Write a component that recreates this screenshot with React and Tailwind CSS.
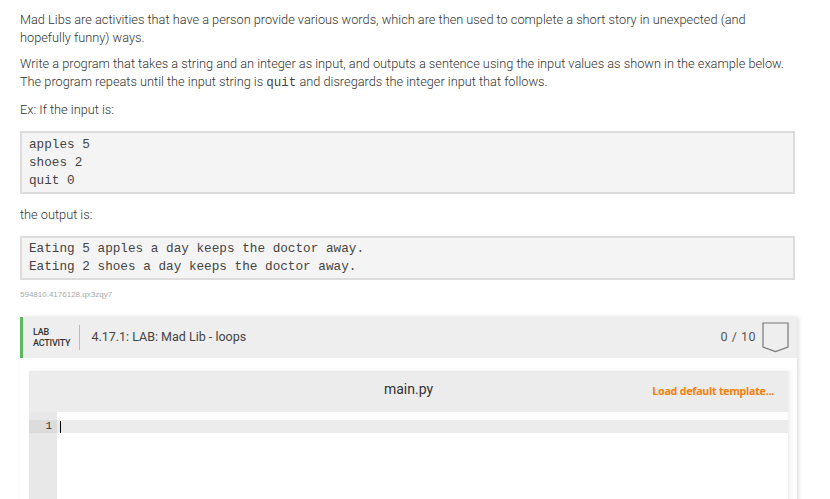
const App = () => {
  return (
    <div className="w-[830px] h-[499px] overflow-hidden bg-white font-['Roboto',sans-serif] text-[#333] font-light">
      <div className="pl-5 pr-[35px] pt-[11px]">
        <p className="text-[12.75px] leading-[18px]">
          Mad Libs are activities that have a person provide various words, which are then used to complete a short story in unexpected (and hopefully funny) ways.
        </p>
        <p className="text-[12.75px] leading-[18px] mt-[8px]">
          Write a program that takes a string and an integer as input, and outputs a sentence using the input values as shown in the example below. The program repeats until the input string is{" "}
          <code className="font-['Liberation_Mono',monospace] font-normal text-[12.5px] leading-[14px] text-[#444]">quit</code> and disregards the integer input that follows.
        </p>
        <p className="text-[12.75px] leading-[18px] mt-[10px]">Ex: If the input is:</p>
        <pre className="mt-[12px] bg-[#f4f4f4] border-2 border-[#dcdcdc] px-[7px] py-[3px] font-['Liberation_Mono',monospace] font-normal text-[12.7px] leading-[18px] text-[#444] h-[63px]">
{`apples 5
shoes 2
quit 0`}
        </pre>
        <p className="text-[12.75px] leading-[18px] mt-[12px]">the output is:</p>
        <pre className="mt-[12px] bg-[#f4f4f4] border-2 border-[#dcdcdc] px-[7px] py-[2px] font-['Liberation_Mono',monospace] font-normal text-[12.7px] leading-[18px] text-[#444] h-[44px]">
{`Eating 5 apples a day keeps the doctor away.
Eating 2 shoes a day keeps the doctor away.`}
        </pre>
        <div className="mt-[10px] text-[8px] leading-[10px] text-[#aaa] font-['Liberation_Sans',sans-serif] font-normal">594810.4176128.qx3zqy7</div>
      </div>

      <div className="ml-5 mr-[33px] mt-[17px] shadow-[2px_0_4px_rgba(0,0,0,0.12)]">
        <div className="flex items-center h-[41px] bg-[#eeeeee] border-l-[3px] border-[#5cb85c]">
          <div className="pl-[10px] pr-[9px] text-[9px] leading-[11px] font-medium text-[#333] tracking-[-0.2px]">
            LAB
            <br />
            ACTIVITY
          </div>
          <div className="w-px h-[25px] bg-[#bbb]"></div>
          <div className="pl-[11px] text-[12.5px] font-normal text-[#444]">4.17.1: LAB: Mad Lib - loops</div>
          <div className="ml-auto flex items-center gap-[6px] pr-[8px]">
            <span className="text-[12.5px] font-normal text-[#555] tracking-[0.5px]">0 / 10</span>
            <svg width="27" height="31" viewBox="0 0 27 31">
              <path d="M1 1 H26 V25 L13.5 29.5 L1 25 Z" fill="none" stroke="#777" strokeWidth="1.2" />
            </svg>
          </div>
        </div>
        <div className="bg-white pt-[13px] px-[9px] pb-[40px]">
          <div className="shadow-[2px_0_4px_rgba(0,0,0,0.08)]">
            <div className="h-[41px] bg-[#ececec] flex items-center relative">
              <div className="absolute left-0 right-0 text-center text-[14px] font-normal text-[#333] top-[8px]">main.py</div>
              <div className="ml-auto pr-[14px] pt-[1px] text-[10.6px] font-bold text-[#f5800a] font-['Noto_Sans',sans-serif] tracking-[-0.2px]">
                Load default template...
              </div>
            </div>
            <div className="flex h-[90px]">
              <div className="w-[28px] bg-[#e8e8e8] pt-[8px]">
                <div className="h-[13px] bg-[#dcdcdc] text-right pr-[5px] text-[11px] leading-[13px] font-['Liberation_Mono',monospace] font-normal text-[#333]">1</div>
              </div>
              <div className="flex-1 bg-white pt-[8px]">
                <div className="h-[13px] bg-[#ececec] flex items-center pl-[3px]">
                  <div className="w-px h-[12px] bg-black"></div>
                </div>
              </div>
            </div>
          </div>
        </div>
      </div>
    </div>
  );
};

export default App;
